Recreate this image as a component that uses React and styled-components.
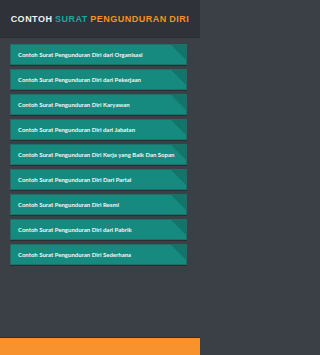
import React from 'react';
import styled, { createGlobalStyle } from 'styled-components';

const GlobalStyle = createGlobalStyle`
  html, body {
    margin: 0;
    padding: 0;
    background: #3b4046;
  }
  #root {
    width: 200px;
    height: 355px;
  }
`;

const Page = styled.div`
  width: 200px;
  height: 355px;
  display: flex;
  flex-direction: column;
  background: #3b4046;
  overflow: hidden;
`;

const Header = styled.header`
  height: 37px;
  flex-shrink: 0;
  background: #2f3238;
  display: flex;
  align-items: center;
  justify-content: center;
  box-shadow: 0 1px 0 #2a2d32;
`;

const Title = styled.h1`
  margin: 0;
  font-family: "Liberation Sans", Arial, sans-serif;
  font-weight: 700;
  font-size: 9px;
  letter-spacing: 0.5px;
  word-spacing: -0.5px;
  text-transform: uppercase;
  color: #f2f2f2;
  white-space: nowrap;
`;

const Word = styled.span`
  color: ${(p) => p.$color};
`;

const List = styled.ul`
  flex: 1;
  list-style: none;
  margin: 0;
  padding: 7px 13px 0 10px;
  display: flex;
  flex-direction: column;
  gap: 4px;
`;

const Card = styled.li`
  position: relative;
  height: 19px;
  flex-shrink: 0;
  display: flex;
  align-items: center;
  padding-left: 7px;
  background: #178a7f;
  border: 1px solid #1e6f68;
  box-shadow: 0 1px 0 #2a2e33;
  overflow: hidden;
  font-family: Lato, "Open Sans", sans-serif;
  font-weight: 700;
  font-size: 6px;
  color: #f4f7f6;
  white-space: nowrap;
`;

const Fold = styled.span`
  position: absolute;
  top: 0;
  right: 0;
  width: 15px;
  height: 15px;
  background: #137569;
  clip-path: polygon(0 0, 100% 0, 100% 100%);
`;

const Footer = styled.footer`
  height: 17px;
  flex-shrink: 0;
  background: #f8922c;
  border-top: 1px solid #2b2d2e;
`;

const items = [
  'Contoh Surat Pengunduran Diri dari Organisasi',
  'Contoh Surat Pengunduran Diri dari Pekerjaan',
  'Contoh Surat Pengunduran Diri Karyawan',
  'Contoh Surat Pengunduran Diri dari Jabatan',
  'Contoh Surat Pengunduran Diri Kerja yang Baik Dan Sopan',
  'Contoh Surat Pengunduran Diri Dari Partai',
  'Contoh Surat Pengunduran Diri Resmi',
  'Contoh Surat Pengunduran Diri dari Pabrik',
  'Contoh Surat Pengunduran Diri Sederhana',
];

export default function App() {
  return (
    <Page>
      <GlobalStyle />
      <Header>
        <Title>
          <Word $color="#f2f2f2">Contoh</Word>{' '}
          <Word $color="#1ea59c">Surat</Word>{' '}
          <Word $color="#f7931e">Pengunduran Diri</Word>
        </Title>
      </Header>
      <List>
        {items.map((t) => (
          <Card key={t}>
            {t}
            <Fold />
          </Card>
        ))}
      </List>
      <Footer />
    </Page>
  );
}
